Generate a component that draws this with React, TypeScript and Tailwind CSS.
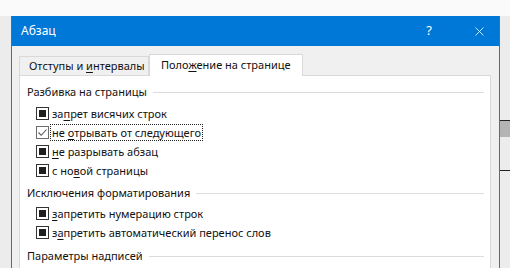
import { X } from "lucide-react";

const font = { fontFamily: '"Segoe UI", "Noto Sans", "Open Sans", sans-serif' };

function Mixed() {
  return (
    <span className="flex h-[13px] w-[13px] shrink-0 items-center justify-center border border-[#333] bg-white">
      <span className="h-[7px] w-[7px] bg-[#1f1f1f]" />
    </span>
  );
}

function Checked() {
  return (
    <span className="flex h-[13px] w-[13px] shrink-0 items-center justify-center border border-[#6d6d6d] bg-white">
      <svg width="11" height="11" viewBox="0 0 11 11">
        <path d="M1.5 5.5 L4.2 8.3 L9.5 2.5" fill="none" stroke="#555" strokeWidth="1.1" />
      </svg>
    </span>
  );
}

function Row({
  checked,
  focus,
  children,
}: {
  checked?: boolean;
  focus?: boolean;
  children: React.ReactNode;
}) {
  return (
    <div className="flex h-[19px] items-center gap-[1px] pl-[9px]">
      {checked ? <Checked /> : <Mixed />}
      <span
        className={
          "whitespace-nowrap border px-px leading-[15px] " +
          (focus ? "border-dotted border-[#222]" : "border-transparent")
        }
      >
        {children}
      </span>
    </div>
  );
}

function Header({ children, className }: { children: string; className: string }) {
  return (
    <div className={"flex h-[16px] items-center gap-[6px] pr-[6px] " + className}>
      <span className="whitespace-nowrap">{children}</span>
      <span className="h-px flex-1 bg-[#dcdcdc]" />
    </div>
  );
}

export default function App() {
  return (
    <div
      className="flex h-[268px] w-[510px] flex-col overflow-hidden bg-[#f6f6f6] text-[11px] text-[#111]"
      style={font}
    >
      <div className="h-[16px] shrink-0 bg-[#fafafa]" />
      <div className="flex flex-1">
        <div className="w-[11px] shrink-0 bg-[#ececec]" />
        <div className="flex flex-1 flex-col border-x border-[#1a7bd0] bg-[#f0f0f0]">
          <div className="flex h-[30px] shrink-0 items-center bg-[#0078d7] pl-[9px] pr-[12px] text-white">
            <span className="flex-1 text-[12px]">Абзац</span>
            <span className="mr-[40px] text-[13px]">?</span>
            <X size={15} strokeWidth={1.3} />
          </div>
          <div className="flex flex-1 flex-col pl-[7px] pr-[8px]">
            <div className="flex h-[29px] shrink-0 items-end">
              <div className="flex h-[19px] w-[130px] items-center border border-b-0 border-[#d9d9d9] pl-[9px]">
                <span className="whitespace-nowrap">
                  Отступы и <span className="underline underline-offset-2">и</span>нтервалы
                </span>
              </div>
              <div className="relative -mb-px flex h-[22px] w-[154px] items-center border border-b-0 border-[#d9d9d9] bg-white pl-[11px]">
                <span className="whitespace-nowrap">
                  Поло<span className="underline underline-offset-2">ж</span>ение на странице
                </span>
              </div>
            </div>
            <div className="flex-1 border border-b-0 border-[#d9d9d9] bg-white pl-[7px]">
              <Header className="mt-[8px]">Разбивка на страницы</Header>
              <div className="mt-[4px]">
                <Row>
                  за<span className="underline underline-offset-2">п</span>рет висячих строк
                </Row>
                <Row checked focus>
                  не <span className="underline underline-offset-2">о</span>трывать от следующего
                </Row>
                <Row>
                  <span className="underline underline-offset-2">н</span>е разрывать абзац
                </Row>
                <Row>
                  с но<span className="underline underline-offset-2">в</span>ой страницы
                </Row>
              </div>
              <Header className="mt-[5px]">Исключения форматирования</Header>
              <div className="mt-[3px]">
                <Row>
                  <span className="underline underline-offset-2">з</span>апретить нумерацию строк
                </Row>
                <Row>
                  з<span className="underline underline-offset-2">а</span>претить автоматический перенос слов
                </Row>
              </div>
              <Header className="mt-[6px]">Параметры надписей</Header>
            </div>
          </div>
        </div>
        <div className="flex w-[10px] shrink-0 flex-col bg-[#ececec]">
          <div className="h-[104px] shrink-0" />
          <div className="h-px bg-[#222]" />
          <div className="h-[16px] bg-[#b4b4b4]" />
          <div className="h-[33px]" />
          <div className="h-px bg-[#222]" />
        </div>
      </div>
    </div>
  );
}
